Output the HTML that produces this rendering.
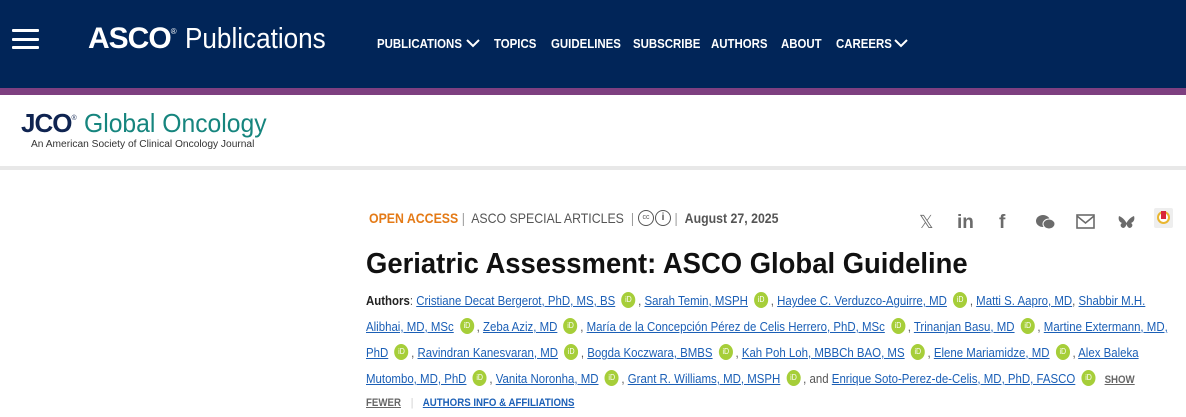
<!DOCTYPE html>
<html><head><meta charset="utf-8"><style>
*{margin:0;padding:0;box-sizing:border-box}
body{width:1186px;height:417px;overflow:hidden;background:#fff;font-family:"Liberation Sans",sans-serif;position:relative}
.hdr{position:absolute;left:0;top:0;width:1186px;height:88px;background:#012558}
.band{position:absolute;left:0;top:88px;width:1186px;height:7px;background:#7e3f80}
.ham{position:absolute;left:12px;width:27px;height:3px;background:#fff;border-radius:1px}
.nav{position:absolute;top:36px;color:#fff;font-size:13px;font-weight:bold;white-space:nowrap;transform:scaleX(.88);transform-origin:left}
.abs{position:absolute;white-space:nowrap;transform-origin:left center}
a{color:#1b5fb6;text-decoration:underline}
.al{position:absolute;left:366px;font-size:13px;white-space:nowrap;transform-origin:left;color:#555}
.o{display:inline-block;width:16px;height:16px;border-radius:50%;background:#a6ce39;color:#fff;font-size:8px;text-align:center;line-height:16px;vertical-align:3px;margin:0 3px 0 7px}
.ic{position:absolute;top:212px;color:#6b6b6b;font-size:19px;font-weight:bold}
.sep{color:#999;margin:0 4px}
.cc{position:absolute;top:210px;width:16px;height:16px;border:1.5px solid #555;border-radius:50%;text-align:center;color:#555;line-height:13px}
</style></head><body>
<div class="hdr"></div><div class="band"></div>
<div class="ham" style="top:29px"></div><div class="ham" style="top:38px"></div><div class="ham" style="top:46px"></div>
<div class="abs" style="left:88px;top:22px;color:#fff;font-size:30px;"><b style="letter-spacing:-1px">ASCO</b><sup style="font-size:8px;vertical-align:14px">®</sup> <span style="display:inline-block;font-weight:normal;transform:scaleX(.9);transform-origin:left;font-size:29px">Publications</span></div>
<div class="nav" style="left:377px">PUBLICATIONS</div>
<svg style="position:absolute;left:466px;top:38px" width="14" height="10"><path d="M1 2l6 6 6-6" stroke="#fff" stroke-width="2" fill="none"/></svg>
<div class="nav" style="left:494px">TOPICS</div>
<div class="nav" style="left:551px">GUIDELINES</div>
<div class="nav" style="left:633px">SUBSCRIBE</div>
<div class="nav" style="left:711px">AUTHORS</div>
<div class="nav" style="left:781px">ABOUT</div>
<div class="nav" style="left:836px">CAREERS</div>
<svg style="position:absolute;left:894px;top:38px" width="14" height="10"><path d="M1 2l6 6 6-6" stroke="#fff" stroke-width="2" fill="none"/></svg>

<div class="abs" style="left:21px;top:108px;font-size:26px;color:#0f2451"><b style="letter-spacing:-1px">JCO</b><sup style="font-size:7px;vertical-align:12px">®</sup> <span style="display:inline-block;color:#16857e;transform:scaleX(.95);transform-origin:left">Global Oncology</span></div>
<div class="abs" style="left:31px;top:139px;font-size:10px;color:#333;transform:scaleX(1.02)">An American Society of Clinical Oncology Journal</div>
<div style="position:absolute;left:0;top:166px;width:1186px;height:4px;background:#e8e8e8"></div>

<div class="abs" style="left:369px;top:210px;font-size:14px;color:#555;transform:scaleX(.88)"><b style="color:#e47a16">OPEN ACCESS</b><span class="sep">|</span> ASCO SPECIAL ARTICLES <span class="sep">|</span><span style="display:inline-block;width:38px"></span><span class="sep">|</span> <b style="color:#555">August 27, 2025</b></div>
<div class="cc" style="left:638px;font-size:7px">cc</div>
<div class="cc" style="left:655px;font-size:10px;font-weight:bold">i</div>

<div class="ic" style="left:919px;font-weight:normal;font-size:18px">𝕏</div>
<div class="ic" style="left:957px">in</div>
<div class="ic" style="left:999px">f</div>
<svg style="position:absolute;left:1036px;top:214px" width="20" height="16"><ellipse cx="7" cy="7" rx="7" ry="6" fill="#6b6b6b"/><ellipse cx="13" cy="10" rx="6" ry="5" fill="#6b6b6b" stroke="#fff"/></svg>
<svg style="position:absolute;left:1076px;top:214px" width="19" height="15"><rect x="1" y="1" width="17" height="13" fill="none" stroke="#6b6b6b" stroke-width="1.6"/><path d="M1 2l8.5 7L18 2" fill="none" stroke="#6b6b6b" stroke-width="1.6"/></svg>
<svg style="position:absolute;left:1118px;top:215px" width="17" height="14"><path d="M1 1c3 1 6 4 7.5 7C10 5 13 2 16 1c1 3 0 6-3 7 2 1 2 4-1 5-2 0-3-2-3.5-4-.5 2-1.5 4-3.5 4-3-1-3-4-1-5C1 7 0 4 1 1z" fill="#6b6b6b"/></svg>
<div style="position:absolute;left:1154px;top:208px;width:19px;height:20px;background:#eee;border-radius:2px"><div style="position:absolute;left:3px;top:3px;width:13px;height:13px;border-radius:50%;border:2px solid #e9b630;background:#fff"></div><div style="position:absolute;left:7px;top:3px;width:5px;height:8px;background:#d9263a"></div></div>

<div class="abs" style="left:366px;top:248px;font-size:29px;font-weight:bold;color:#111;transform:scaleX(.946)">Geriatric Assessment: ASCO Global Guideline</div>

<div class="al" style="top:292px;transform:scaleX(.88)"><b style="color:#222">Authors</b>: <a>Cristiane Decat Bergerot, PhD, MS, BS</a><span class="o">iD</span>, <a>Sarah Temin, MSPH</a><span class="o">iD</span>, <a>Haydee C. Verduzco-Aguirre, MD</a><span class="o">iD</span>, <a>Matti S. Aapro, MD</a>, <a>Shabbir M.H.</a></div>
<div class="al" style="top:318px;transform:scaleX(.88)"><a>Alibhai, MD, MSc</a><span class="o">iD</span>, <a>Zeba Aziz, MD</a><span class="o">iD</span>, <a>María de la Concepción Pérez de Celis Herrero, PhD, MSc</a><span class="o">iD</span>, <a>Trinanjan Basu, MD</a><span class="o">iD</span>, <a>Martine Extermann, MD,</a></div>
<div class="al" style="top:344px;transform:scaleX(.88)"><a>PhD</a><span class="o">iD</span>, <a>Ravindran Kanesvaran, MD</a><span class="o">iD</span>, <a>Bogda Koczwara, BMBS</a><span class="o">iD</span>, <a>Kah Poh Loh, MBBCh BAO, MS</a><span class="o">iD</span>, <a>Elene Mariamidze, MD</a><span class="o">iD</span>, <a>Alex Baleka</a></div>
<div class="al" style="top:370px;transform:scaleX(.88)"><a>Mutombo, MD, PhD</a><span class="o">iD</span>, <a>Vanita Noronha, MD</a><span class="o">iD</span>, <a>Grant R. Williams, MD, MSPH</a><span class="o">iD</span>, and <a>Enrique Soto-Perez-de-Celis, MD, PhD, FASCO</a><span class="o">iD</span> &nbsp;<b style="font-size:11px;color:#666;text-decoration:underline">SHOW</b></div>
<div class="al" style="top:397px;font-size:11px;font-weight:bold;transform:scaleX(.88)"><span style="color:#666;text-decoration:underline">FEWER</span> <span style="color:#ddd;margin:0 8px">|</span> <a style="color:#1b5fb6">AUTHORS INFO &amp; AFFILIATIONS</a></div>
</body></html>
